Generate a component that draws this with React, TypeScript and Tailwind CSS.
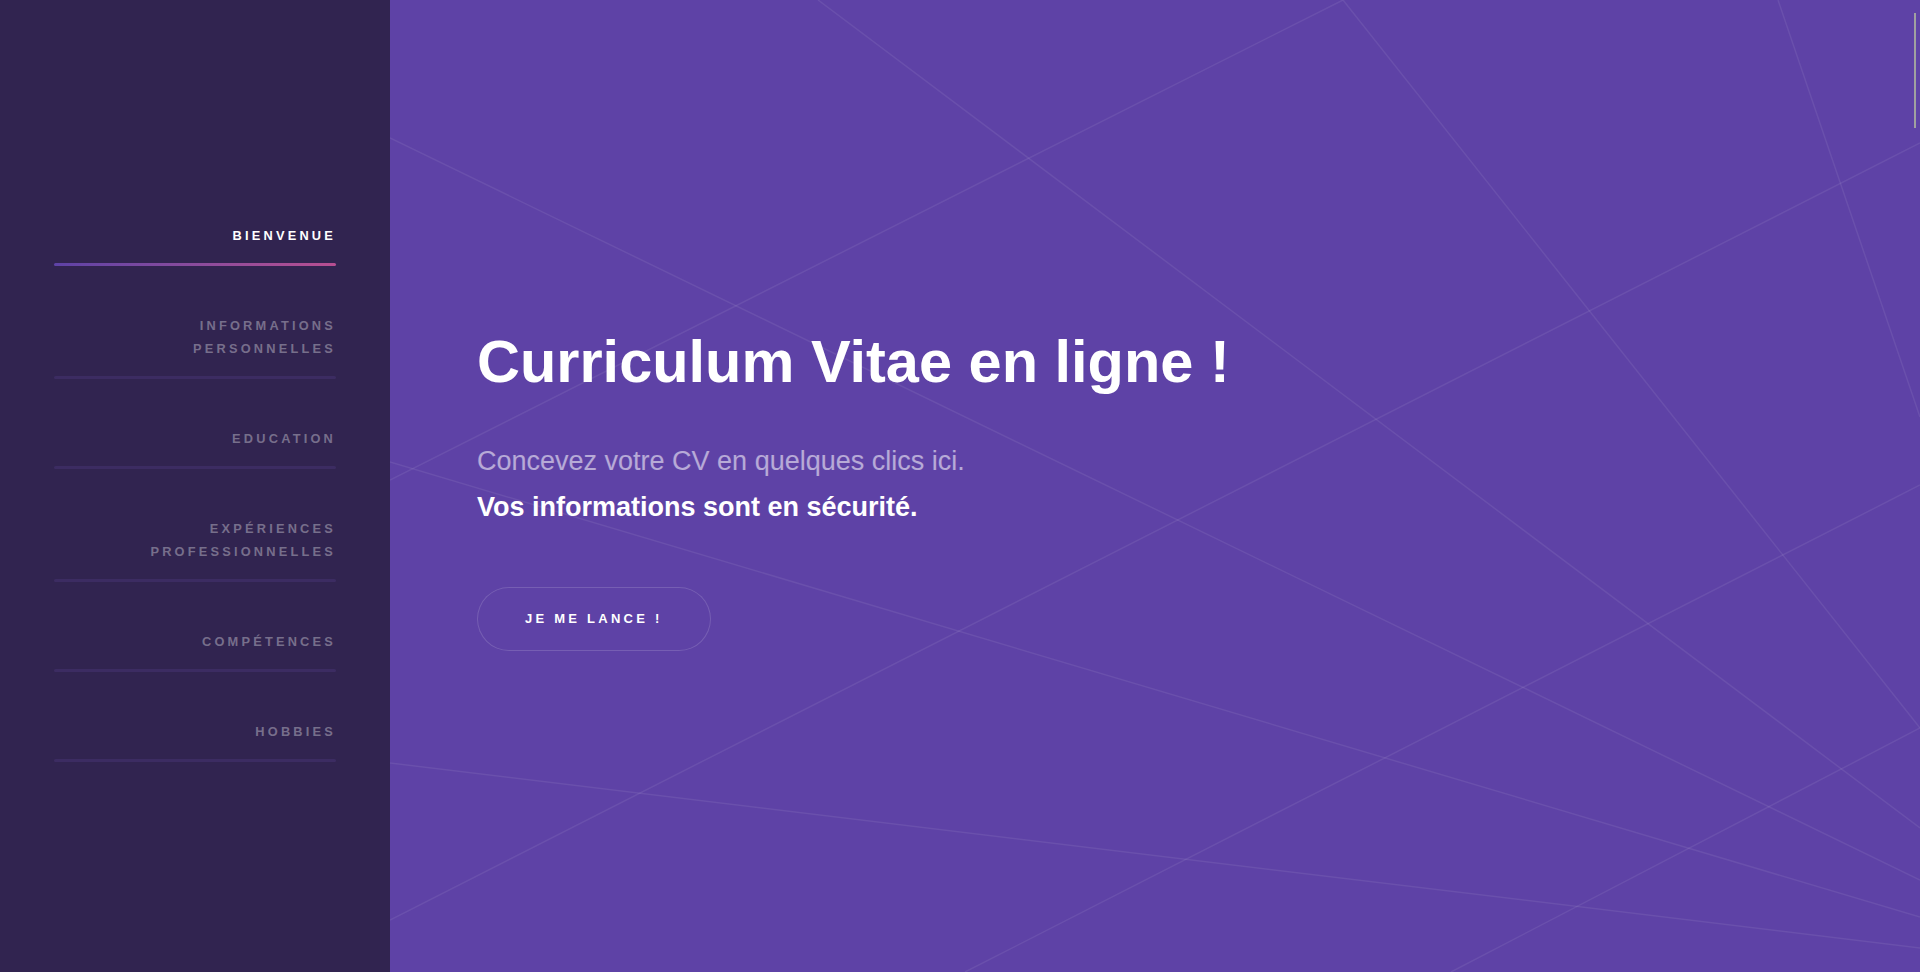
import React from "react";

const items: { lines: string[]; active?: boolean }[] = [
  { lines: ["BIENVENUE"], active: true },
  { lines: ["INFORMATIONS", "PERSONNELLES"] },
  { lines: ["EDUCATION"] },
  { lines: ["EXPÉRIENCES", "PROFESSIONNELLES"] },
  { lines: ["COMPÉTENCES"] },
  { lines: ["HOBBIES"] },
];

const bgLines: [number, number, number, number][] = [
  [428, 0, 1530, 828],
  [953, 0, 1530, 728],
  [953, 0, 0, 480],
  [1388, 0, 1530, 417],
  [0, 138, 1530, 880],
  [0, 462, 1530, 917],
  [0, 920, 1530, 143],
  [0, 763, 1530, 948],
  [575, 972, 1530, 485],
  [1061, 972, 1530, 728],
];

export default function App() {
  return (
    <div className="flex h-[972px] w-full overflow-hidden font-['Liberation_Sans',Arial,Helvetica,sans-serif]">
      <aside className="flex w-[390px] shrink-0 flex-col justify-center bg-[#312450] px-[54px] pb-[3px]">
        <nav>
          <ul className="flex flex-col gap-[31.4px]">
            {items.map((it, i) => (
              <li key={i}>
                <a
                  href="#"
                  className={
                    "relative block py-[18px] text-right text-[12.8px] font-bold leading-[22.8px] tracking-[0.25em] " +
                    (it.active ? "text-white" : "text-white/35")
                  }
                >
                  {it.lines.map((l, j) => (
                    <React.Fragment key={j}>
                      {j > 0 && <br />}
                      {l}
                    </React.Fragment>
                  ))}
                  {it.active ? (
                    <span className="absolute bottom-0 right-0 h-[3px] w-full rounded-[3px] bg-gradient-to-r from-[#5e42a6] to-[#b74e91]" />
                  ) : (
                    <span className="absolute bottom-0 right-0 h-[3px] w-full rounded-[3px] bg-[#3c2c62]" />
                  )}
                </a>
              </li>
            ))}
          </ul>
        </nav>
      </aside>
      <main className="relative flex-1 overflow-hidden bg-[#5e42a6]">
        <svg
          className="absolute inset-0 h-full w-full"
          viewBox="0 0 1530 972"
          preserveAspectRatio="none"
        >
          {bgLines.map(([x1, y1, x2, y2], i) => (
            <line
              key={i}
              x1={x1}
              y1={y1}
              x2={x2}
              y2={y2}
              stroke="rgba(255,255,255,0.075)"
              strokeWidth={1.5}
            />
          ))}
        </svg>
        <div className="relative flex h-full flex-col justify-center pl-[87px] pt-[5px]">
          <h1 className="mb-[41px] text-[59.5px] font-bold leading-[72px] text-white">
            Curriculum Vitae en ligne !
          </h1>
          <p className="mb-[57px] text-[27px] leading-[45.5px] text-white/55">
            Concevez votre CV en quelques clics ici.
            <br />
            <strong className="font-bold text-white">Vos informations sont en sécurité.</strong>
          </p>
          <div>
            <a
              href="#"
              className="inline-flex h-[64px] items-center rounded-full px-[48px] text-[13px] font-bold tracking-[0.25em] text-white shadow-[inset_0_0_0_1px_rgba(255,255,255,0.15)]"
            >
              JE ME LANCE !
            </a>
          </div>
        </div>
        <div className="absolute right-[4px] top-[13px] h-[115px] w-[2px] bg-[#a0a0a0]" />
      </main>
    </div>
  );
}
